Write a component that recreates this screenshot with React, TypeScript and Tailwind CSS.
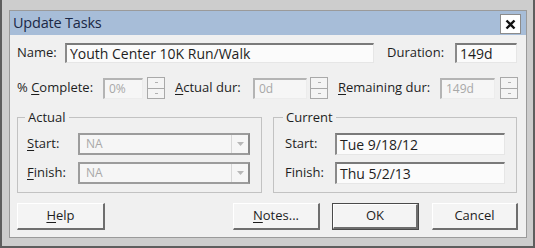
import React from "react";

const font = { fontFamily: '"Open Sans", "Noto Sans", sans-serif' };

const Mn: React.FC<{ c: string }> = ({ c }) => <span className="underline underline-offset-2">{c}</span>;

const TextBox: React.FC<{ value: string; w: string; h?: string }> = ({ value, w, h = "h-[20px]" }) => (
  <div
    className={`${w} ${h} flex items-center bg-[#fbfbfb] border-t-2 border-l-2 border-t-[#7a7a7a] border-l-[#8a8a8a] border-r border-b border-r-[#e6e6e6] border-b-[#e6e6e6] pl-[3px] text-[14px] text-[#1e1e1e] leading-none`}
  >
    {value}
  </div>
);

const DisabledBox: React.FC<{ value: string; w: string }> = ({ value, w }) => (
  <div
    className={`${w} h-[21px] flex items-center bg-[#f6f6f6] border-t-2 border-l-2 border-t-[#b4b4b4] border-l-[#b4b4b4] border-r border-b border-r-[#ececec] border-b-[#ececec] pl-[4px] text-[12px] text-[#a8a8a8] leading-none`}
  >
    {value}
  </div>
);

const Spin: React.FC<{ ml: string }> = ({ ml }) => (
  <div className={`${ml} w-[18px] h-[22px] flex flex-col border border-[#a9a9a9] bg-[#f4f4f4]`}>
    <div className="flex-1 flex items-center justify-center border-b border-[#a9a9a9]">
      <span className="block w-[3px] h-px bg-[#b0b0b0]" />
    </div>
    <div className="flex-1 flex items-center justify-center">
      <span className="block w-[3px] h-px bg-[#b0b0b0]" />
    </div>
  </div>
);

const Combo: React.FC<{ value: string }> = ({ value }) => (
  <div className="w-[172px] h-[22px] flex items-stretch bg-[#f6f6f6] border-2 border-[#9c9c9c] border-r-[#8a8a8a]">
    <div className="flex-1 flex items-center pl-[6px] text-[12px] text-[#a8a8a8] leading-none">{value}</div>
    <div className="w-[17px] flex items-center justify-center border-l border-[#d8d8d8]">
      <svg width="7" height="4" viewBox="0 0 7 4">
        <path d="M0 0h7L3.5 4z" fill="#b8b8b8" />
      </svg>
    </div>
  </div>
);

const Btn: React.FC<{ children: React.ReactNode; w: string; ml?: string; def?: boolean }> = ({ children, w, ml = "", def }) => (
  <div className={`${w} ${ml} h-[27px] ${def ? "border border-[#4a4a4a]" : ""}`}>
    <div
      className="w-full h-full flex items-center justify-center bg-[#f4f4f4] border-t border-l border-t-white border-l-white border-r-2 border-b-2 border-r-[#6e6e6e] border-b-[#6e6e6e] text-[13px] text-[#1e1e1e]"
    >
      {children}
    </div>
  </div>
);

export default function App() {
  return (
    <div
      className="w-[535px] h-[248px] bg-[#cdcdcd] border-l-2 border-r-2 border-b-2 border-[#5e5e5e] pt-[10px] pl-[7px] pr-[6px] pb-[8px]"
      style={font}
    >
      <div className="w-full h-full border border-[#9a9a9a] bg-[#f0f0f0] flex flex-col">
        <div className="h-[24px] bg-[#a7bdd8] flex items-center justify-between pl-[3px] pr-[5px]">
          <span className="text-[14.5px] text-[#1b2846] tracking-[-0.2px]">Update Tasks</span>
          <div className="w-[21px] h-[20px] bg-white border border-[#8c8c8c] flex items-center justify-center mt-[2px]">
            <svg width="11" height="11" viewBox="0 0 11 11">
              <path d="M1.5 1.5l8 8M9.5 1.5l-8 8" stroke="#111" strokeWidth="2.4" />
            </svg>
          </div>
        </div>

        <div className="flex-1 flex flex-col pl-[7px] text-[13px] text-[#1e1e1e]">
          <div className="mt-[8px] flex items-center">
            <span className="w-[48px]">Name:</span>
            <TextBox value="Youth Center 10K Run/Walk" w="w-[309px]" />
            <span className="ml-[13px] w-[68px]">Duration:</span>
            <TextBox value="149d" w="w-[62px]" />
          </div>

          <div className="mt-[14px] flex items-center">
            <span className="w-[86px]">
              % <Mn c="C" />omplete:
            </span>
            <DisabledBox value="0%" w="w-[40px]" />
            <Spin ml="ml-[4px]" />
            <span className="ml-[10px] w-[78px]">
              <Mn c="A" />ctual dur:
            </span>
            <DisabledBox value="0d" w="w-[54px]" />
            <Spin ml="ml-[3px]" />
            <span className="ml-[10px] w-[102px]">
              <Mn c="R" />emaining dur:
            </span>
            <DisabledBox value="149d" w="w-[55px]" />
            <Spin ml="ml-[5px]" />
          </div>

          <div className="mt-[10px] flex">
            <fieldset className="w-[245px] border border-[#c2c2c2] pl-[9px] pb-[8px]">
              <legend className="ml-[-2px] px-[3px] text-[13px] leading-[16px]">Actual</legend>
              <div className="mt-[8px] flex items-center">
                <span className="w-[51px]">
                  <Mn c="S" />tart:
                </span>
                <Combo value="NA" />
              </div>
              <div className="mt-[7px] flex items-center">
                <span className="w-[51px]">
                  <Mn c="F" />inish:
                </span>
                <Combo value="NA" />
              </div>
            </fieldset>
            <fieldset className="ml-[11px] w-[244px] border border-[#c2c2c2] pl-[11px] pb-[8px]">
              <legend className="ml-[-2px] px-[3px] text-[13px] leading-[16px]">Current</legend>
              <div className="mt-[8px] flex items-center">
                <span className="w-[50px]">Start:</span>
                <TextBox value="Tue 9/18/12" w="w-[170px]" h="h-[22px]" />
              </div>
              <div className="mt-[7px] flex items-center">
                <span className="w-[50px]">Finish:</span>
                <TextBox value="Thu 5/2/13" w="w-[170px]" h="h-[22px]" />
              </div>
            </fieldset>
          </div>

          <div className="mt-[10px] flex">
            <Btn w="w-[88px]">
              <Mn c="H" />elp
            </Btn>
            <Btn w="w-[87px]" ml="ml-[128px]">
              <Mn c="N" />otes...
            </Btn>
            <Btn w="w-[87px]" ml="ml-[12px]" def>
              OK
            </Btn>
            <Btn w="w-[86px]" ml="ml-[13px]">
              Cancel
            </Btn>
          </div>
        </div>
      </div>
    </div>
  );
}
